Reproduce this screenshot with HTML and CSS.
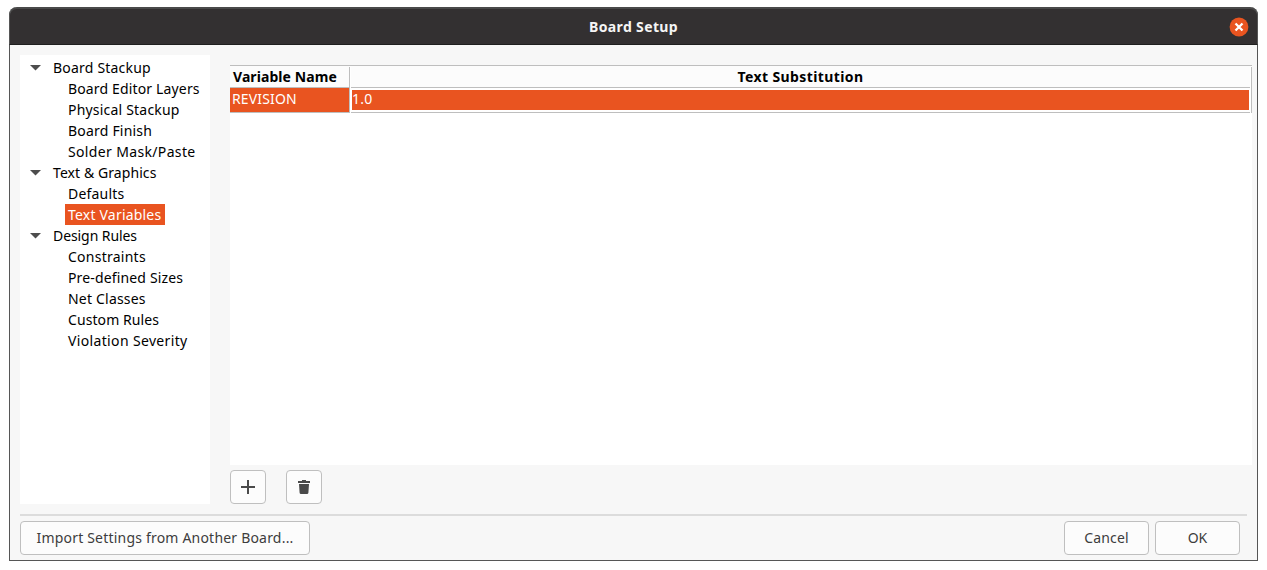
FILE: index.html
```html
<!DOCTYPE html>
<html lang="en">
<head>
<meta charset="utf-8">
<title>Board Setup</title>
<link rel="stylesheet" href="styles.css">
</head>
<body>
<div class="window">
  <header class="titlebar">
    <h1 class="title">Board Setup</h1>
    <button class="close" aria-label="Close"><svg width="20" height="20" viewBox="0 0 20 20"><circle cx="10" cy="10" r="9.4" fill="#e95420"/><path d="M6.5 6.500l7 7M13.500 6.500l-7 7" stroke="#fff" stroke-width="2.300"/></svg></button>
  </header>
  <main class="content">
    <nav class="tree">
      <div class="group"><svg class="arrow" width="12" height="6"><path d="M0 0h11L5.5 5.5z"/></svg><span class="ls-20">Board Stackup</span></div>
      <div class="item"><span class="ls-15">Board Editor Layers</span></div>
      <div class="item"><span class="ls-20">Physical Stackup</span></div>
      <div class="item"><span class="ls-20">Board Finish</span></div>
      <div class="item"><span class="ls-35">Solder Mask/Paste</span></div>
      <div class="group"><svg class="arrow" width="12" height="6"><path d="M0 0h11L5.5 5.5z"/></svg><span class="ls-08">Text &amp; Graphics</span></div>
      <div class="item"><span class="ls-20">Defaults</span></div>
      <div class="item selected"><span class="ls-20">Text Variables</span></div>
      <div class="group"><svg class="arrow" width="12" height="6"><path d="M0 0h11L5.5 5.5z"/></svg><span class="ls-tight">Design Rules</span></div>
      <div class="item"><span class="ls-25">Constraints</span></div>
      <div class="item"><span class="ls-15">Pre-defined Sizes</span></div>
      <div class="item"><span class="ls-20">Net Classes</span></div>
      <div class="item"><span class="ls-08">Custom Rules</span></div>
      <div class="item"><span class="ls-35">Violation Severity</span></div>
    </nav>
    <section class="panel">
      <div class="grid">
        <div class="row head"><div class="name"><span class="ls-08">Variable Name</span></div><div class="value"><span class="ls-40">Text Substitution</span></div></div>
        <div class="row data"><div class="name"><span class="ls-15">REVISION</span></div><div class="value"><span class="ls-20">1.0</span></div></div>
      </div>
      <div class="tools">
        <button class="btn icon" aria-label="Add"><svg width="16" height="16" viewBox="0 0 16 16"><path d="M1 8h14M8 1v14" stroke="#4a4a4a" stroke-width="2"/></svg></button>
        <button class="btn icon" aria-label="Delete"><svg width="16" height="16" viewBox="0 0 16 16" fill="#4a4a4a"><path d="M2 2h4V1h4v1h4v2H2zM3 5h10l-.6 8.700q-.1 1.300-1.400 1.300H5q-1.300 0-1.400-1.300z"/></svg></button>
      </div>
    </section>
  </main>
  <footer class="footer">
    <button class="btn import"><span class="ls-20">Import Settings from Another Board...</span></button>
    <button class="btn action cancel"><span class="ls-15">Cancel</span></button>
    <button class="btn action ok"><span>OK</span></button>
  </footer>
</div>
</body>
</html>
```

FILE: styles.css
```css
* { box-sizing: border-box; }
body {
  margin: 0;
  padding: 7px 9px 9px;
  height: 570px;
  background: #fff;
  color: #000;
  font: 14px/21px "Noto Sans", sans-serif;
  overflow: hidden;
}
button { font: inherit; margin: 0; padding: 0; }
.window {
  width: 1249px;
  height: 554px;
  border: 1px solid #565656;
  border-top: 0;
  border-radius: 8px 8px 0 0;
  background: #f7f7f7;
}
.titlebar {
  display: grid;
  grid-template-columns: 1fr auto 1fr;
  align-items: center;
  height: 38px;
  margin: 0 -1px;
  border: 1px solid #565656;
  border-top: 2px solid #4a4a4a;
  border-bottom: 1px solid #1f1f1f;
  border-radius: 8px 8px 0 0;
  background: #333031;
  color: #f5f5f5;
}
.title { grid-column: 2; margin: 0; font-size: 14px; line-height: 21px; font-weight: 700; letter-spacing: .36px; }
.close { justify-self: end; width: 20px; height: 20px; margin-right: 8px; border: 0; background: none; }
.close svg, .arrow { display: block; }
.content { display: flex; gap: 20px; padding: 10px 5px 0 10px; height: 459px; }
.tree { width: 190px; padding-top: 2px; background: #fff; white-space: nowrap; }
.group { display: flex; align-items: center; height: 21px; padding-left: 10px; }
.arrow { width: 12px; margin-right: 11px; fill: #4d4d4d; }
.item { width: max-content; height: 21px; margin-left: 45px; padding: 0 3px; }
.selected { background: #e95420; color: #fff; width: 100px; }
.panel { flex: 1; padding-top: 10px; }
.grid { position: relative; height: 400px; background: #fff; }
/* Column rules run over the row rules, each with a one-pixel light edge. */
.grid::before, .grid::after { content: ""; position: absolute; top: 2px; height: 46px; width: 1px; background: #bebebe; }
.grid::before { left: 119px; box-shadow: 1px 0 #fff; }
.grid::after { right: 0; box-shadow: -1px 0 #fff; }
.row { display: grid; grid-template-columns: 120px 1fr; }
.head { height: 23px; border-top: 1px solid #bebebe; border-bottom: 1px solid #bebebe; background: #fcfcfc; font-weight: 700; }
.head > div { border-right: 1px solid transparent; text-align: center; }
.head .name { text-align: left; padding-left: 3px; }
.data { height: 25px; border-bottom: 1px solid #bebebe; color: #fff; }
.data .name { padding-left: 2px; background: #e95420; }
.data .value { border: 2px solid #fff; border-right-width: 3px; background: #e95420; line-height: 17px; }
.tools { display: flex; gap: 20px; margin-top: 5px; }
.btn { height: 34px; border: 1px solid #bfbfbf; border-radius: 4px; background: #fcfcfc; color: #3d3d3d; white-space: nowrap; }
.icon { display: grid; place-items: center; width: 36px; }
.footer { display: flex; margin: 10px 10px 0; padding: 5px 7px 0 0; border-top: 2px solid #dcdcdc; }
.footer .btn { padding-bottom: 2px; }
.import { width: 290px; margin-right: auto; }
.action { width: 85px; margin-left: 6px; }
.ls-tight { letter-spacing: -.08px; }
.ls-08 { letter-spacing: .08px; }
.ls-15 { letter-spacing: .15px; }
.ls-20 { letter-spacing: .2px; }
.ls-25 { letter-spacing: .25px; }
.ls-35 { letter-spacing: .35px; }
.ls-40 { letter-spacing: .4px; }
```
